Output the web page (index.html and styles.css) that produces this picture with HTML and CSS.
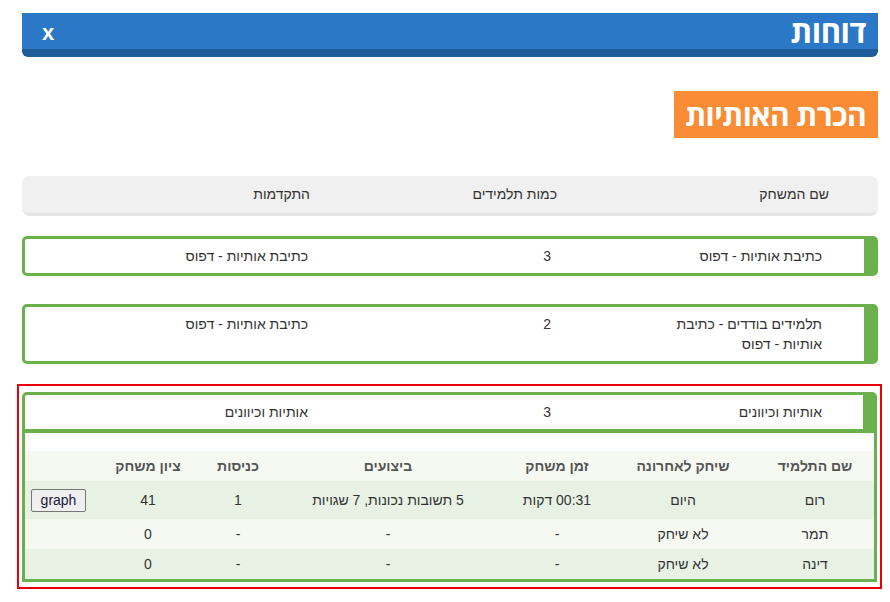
FILE: index.html
```html
<!DOCTYPE html>
<html lang="he" dir="rtl">
<head>
<meta charset="utf-8">
<title>דוחות</title>
<link rel="stylesheet" href="styles.css">
</head>
<body>
<div class="page">
  <header class="topbar">
    <h1 class="topbar-title">דוחות</h1>
    <span class="close">x</span>
  </header>

  <div class="game-title-wrap">
    <h2 class="game-title">הכרת האותיות</h2>
  </div>

  <div class="list-head cols">
    <div class="c1">שם המשחק</div>
    <div class="c2">כמות תלמידים</div>
    <div class="c3">התקדמות</div>
  </div>

  <div class="game-row first cols">
    <div class="c1">כתיבת אותיות - דפוס</div>
    <div class="c2">3</div>
    <div class="c3">כתיבת אותיות - דפוס</div>
  </div>

  <div class="game-row second cols">
    <div class="c1">תלמידים בודדים - כתיבת אותיות - דפוס</div>
    <div class="c2">2</div>
    <div class="c3">כתיבת אותיות - דפוס</div>
  </div>

  <div class="selected">
    <div class="card">
      <div class="card-head cols">
        <div class="c1">אותיות וכיוונים</div>
        <div class="c2">3</div>
        <div class="c3">אותיות וכיוונים</div>
      </div>
      <div class="card-body">
        <table class="students">
          <colgroup>
            <col class="w1"><col class="w2"><col class="w3"><col class="w4"><col class="w5"><col class="w6"><col class="w7">
          </colgroup>
          <thead>
            <tr>
              <th>שם התלמיד</th>
              <th>שיחק לאחרונה</th>
              <th>זמן משחק</th>
              <th>ביצועים</th>
              <th>כניסות</th>
              <th>ציון משחק</th>
              <th></th>
            </tr>
          </thead>
          <tbody>
            <tr class="odd">
              <td>רום</td>
              <td>היום</td>
              <td>00:31 דקות</td>
              <td>5 תשובות נכונות, 7 שגויות</td>
              <td>1</td>
              <td>41</td>
              <td><button class="graph-btn" type="button">graph</button></td>
            </tr>
            <tr class="even">
              <td>תמר</td>
              <td>לא שיחק</td>
              <td>-</td>
              <td>-</td>
              <td>-</td>
              <td>0</td>
              <td></td>
            </tr>
            <tr class="odd">
              <td>דינה</td>
              <td>לא שיחק</td>
              <td>-</td>
              <td>-</td>
              <td>-</td>
              <td>0</td>
              <td></td>
            </tr>
          </tbody>
        </table>
      </div>
    </div>
  </div>
</div>
</body>
</html>
```

FILE: styles.css
```css
html, body {
  margin: 0;
  padding: 0;
  background: #ffffff;
}

body {
  font-family: "Liberation Sans", Arial, "DejaVu Sans", sans-serif;
  font-size: 14px;
  color: #333333;
}

.page {
  padding: 13px 12px 0 22px;
}

/* top bar */
.topbar {
  display: flex;
  align-items: center;
  justify-content: space-between;
  height: 36px;
  background: #2a78c6;
  border-bottom: 8px solid #1f5c9c;
  border-radius: 0 0 6px 6px;
  padding: 0 12px 0 20px;
}

.topbar-title {
  margin: 0;
  font-family: "Open Sans", "Liberation Sans", sans-serif;
  font-weight: 700;
  font-size: 31px;
  line-height: 36px;
  color: #ffffff;
  letter-spacing: -0.5px;
}

.close {
  font-family: "Liberation Sans", Arial, sans-serif;
  font-weight: 700;
  font-size: 22px;
  line-height: 36px;
  color: #ffffff;
  padding-top: 3px;
}

/* game title */
.game-title-wrap {
  display: flex;
  margin-top: 34px;
}

.game-title {
  margin: 0;
  height: 47px;
  padding: 0 12px 0 11px;
  background: #f98c35;
  color: #ffffff;
  font-family: "Open Sans", "Liberation Sans", sans-serif;
  font-weight: 700;
  font-size: 30px;
  line-height: 47px;
  letter-spacing: -0.6px;
}

/* three-column rows */
.cols {
  display: grid;
  align-items: start;
  line-height: 20px;
}

.list-head {
  margin-top: 38px;
  grid-template-columns: 272px 247px 1fr;
  padding: 8px 49px 9px 0;
  background: #f0f0f0;
  border-bottom: 3px solid #e4e4e4;
  border-radius: 8px;
  font-size: 14px;
}

.list-head .c1 {
  padding-left: 90px;
}

.game-row {
  grid-template-columns: 271px 243px 1fr;
  padding: 7px 42px 7px 0;
  border: 3px solid #6ab04c;
  border-right-width: 14px;
  border-radius: 5px;
}

.game-row .c1,
.card-head .c1 {
  padding-left: 100px;
}

.game-row.first {
  margin-top: 20px;
}

.game-row.second {
  margin-top: 28px;
}

/* selected game */
.selected {
  margin: 20px -4px 0 -5px;
  padding: 6px 3px 5px 3px;
  border: 2px solid #e8000b;
}

.card {
  border: 3px solid #6ab04c;
  border-radius: 5px 5px 0 0;
}

.card-head {
  grid-template-columns: 271px 243px 1fr;
  padding: 7px 41px 7px 0;
  border-right: 11px solid #6ab04c;
  border-bottom: 4px solid #6ab04c;
}

.card-body {
  padding-top: 18px;
}

.students {
  width: 100%;
  border-collapse: collapse;
  table-layout: fixed;
}

.w1 { width: 118px; }
.w2 { width: 146px; }
.w3 { width: 106px; }
.w4 { width: 232px; }
.w5 { width: 68px; }
.w6 { width: 112px; }
.w7 { width: 67px; }

.students th {
  height: 30px;
  padding: 0;
  background: #f5f9f2;
  color: #555555;
  font-weight: 700;
  font-size: 14px;
  text-align: center;
}

.students td {
  height: 30px;
  padding: 0;
  text-align: center;
  font-size: 14px;
  color: #333333;
}

.students tr.odd td {
  background: #e8f2e4;
}

.students tr.even td {
  background: #f5f9f2;
}

.students tbody tr:first-child td {
  height: 38px;
}

.graph-btn {
  font-family: "Liberation Sans", Arial, sans-serif;
  font-size: 14px;
  height: 23px;
  padding: 0 9px;
  border: 1px solid #767676;
  border-radius: 2px;
  background: #efefef;
  color: #1a1a3a;
}
```
